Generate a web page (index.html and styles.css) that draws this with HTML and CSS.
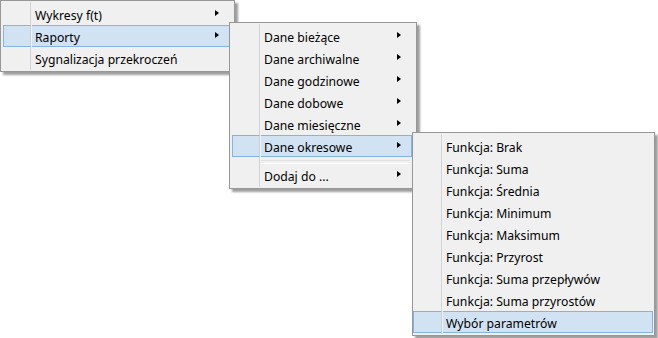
FILE: index.html
```html
<!DOCTYPE html>
<html>

<head>
    <title>Menu raportów</title>
    <link rel="stylesheet" href="styles.css">
</head>

<body>
    <!-- Main context menu -->
    <div class="menu menu-main">
        <div class="item sub">Wykresy f(t)</div>
        <div class="item sub active">Raporty</div>
        <div class="item">Sygnalizacja przekroczeń</div>
    </div>

    <!-- Raporty submenu -->
    <div class="menu menu-reports">
        <div class="item sub">Dane bieżące</div>
        <div class="item sub">Dane archiwalne</div>
        <div class="item sub">Dane godzinowe</div>
        <div class="item sub">Dane dobowe</div>
        <div class="item sub">Dane miesięczne</div>
        <div class="item sub active">Dane okresowe</div>
        <div class="separator"></div>
        <div class="item sub">Dodaj do ...</div>
    </div>

    <!-- Dane okresowe submenu -->
    <div class="menu menu-period">
        <div class="item">Funkcja: Brak</div>
        <div class="item">Funkcja: Suma</div>
        <div class="item">Funkcja: Średnia</div>
        <div class="item">Funkcja: Minimum</div>
        <div class="item">Funkcja: Maksimum</div>
        <div class="item">Funkcja: Przyrost</div>
        <div class="item">Funkcja: Suma przepływów</div>
        <div class="item">Funkcja: Suma przyrostów</div>
        <div class="item active">Wybór parametrów</div>
    </div>
</body>

</html>
```

FILE: styles.css
```css
/* Page */
body {
    margin: 0;
    background: #fff;
    font-family: "Segoe UI", "Noto Sans", sans-serif;
    font-size: 12.2px;
    color: #000;
}

/* Popup menu box */
.menu {
    position: absolute;
    display: flex;
    flex-direction: column;
    box-sizing: border-box;
    background: #f0f0f0;
    border: 1px solid #979797;
    padding: 2px 2px 2px 2px;
    box-shadow: 3px 3px 2px rgba(0, 0, 0, 0.38);
}

/* Vertical gutter line next to the icon column */
.menu::before {
    content: "";
    position: absolute;
    top: 1px;
    bottom: 1px;
    left: 29px;
    width: 1px;
    background: rgba(200, 202, 204, 0.75);
    border-right: 1px solid rgba(255, 255, 255, 0.7);
    z-index: 2;
}

.menu-main {
    left: 0;
    top: 0;
    width: 235px;
    z-index: 1;
}

.menu-reports {
    left: 229px;
    top: 22px;
    width: 188px;
    z-index: 2;
}

.menu-period {
    left: 412px;
    top: 132px;
    width: 243px;
    padding: 2px 1px 2px 0;
    z-index: 3;
}

.menu-period::before {
    left: 28px;
}

/* Menu entries */
.item {
    position: relative;
    height: 22px;
    line-height: 21px;
    padding-top: 1px;
    box-sizing: border-box;
    border: 1px solid transparent;
    margin-right: 2px;
    padding-left: 31px;
    white-space: nowrap;
}

.menu-period .item {
    margin-right: 0;
    padding-left: 32px;
}

.item.active {
    background: #d1e2f3;
    border-color: #84b3e6;
}

/* Submenu arrow */
.item.sub::after {
    content: "";
    position: absolute;
    right: 10px;
    top: 6px;
    border-left: 4px solid #000;
    border-top: 3.5px solid transparent;
    border-bottom: 3.5px solid transparent;
}

/* Horizontal separator */
.separator {
    height: 7px;
    margin-left: 27px;
    margin-right: 4px;
    box-sizing: border-box;
    border-bottom: 1px solid #fff;
    position: relative;
}

.separator::before {
    content: "";
    position: absolute;
    left: 0;
    right: 0;
    top: 3px;
    height: 1px;
    background: #e0e0e0;
}
```
